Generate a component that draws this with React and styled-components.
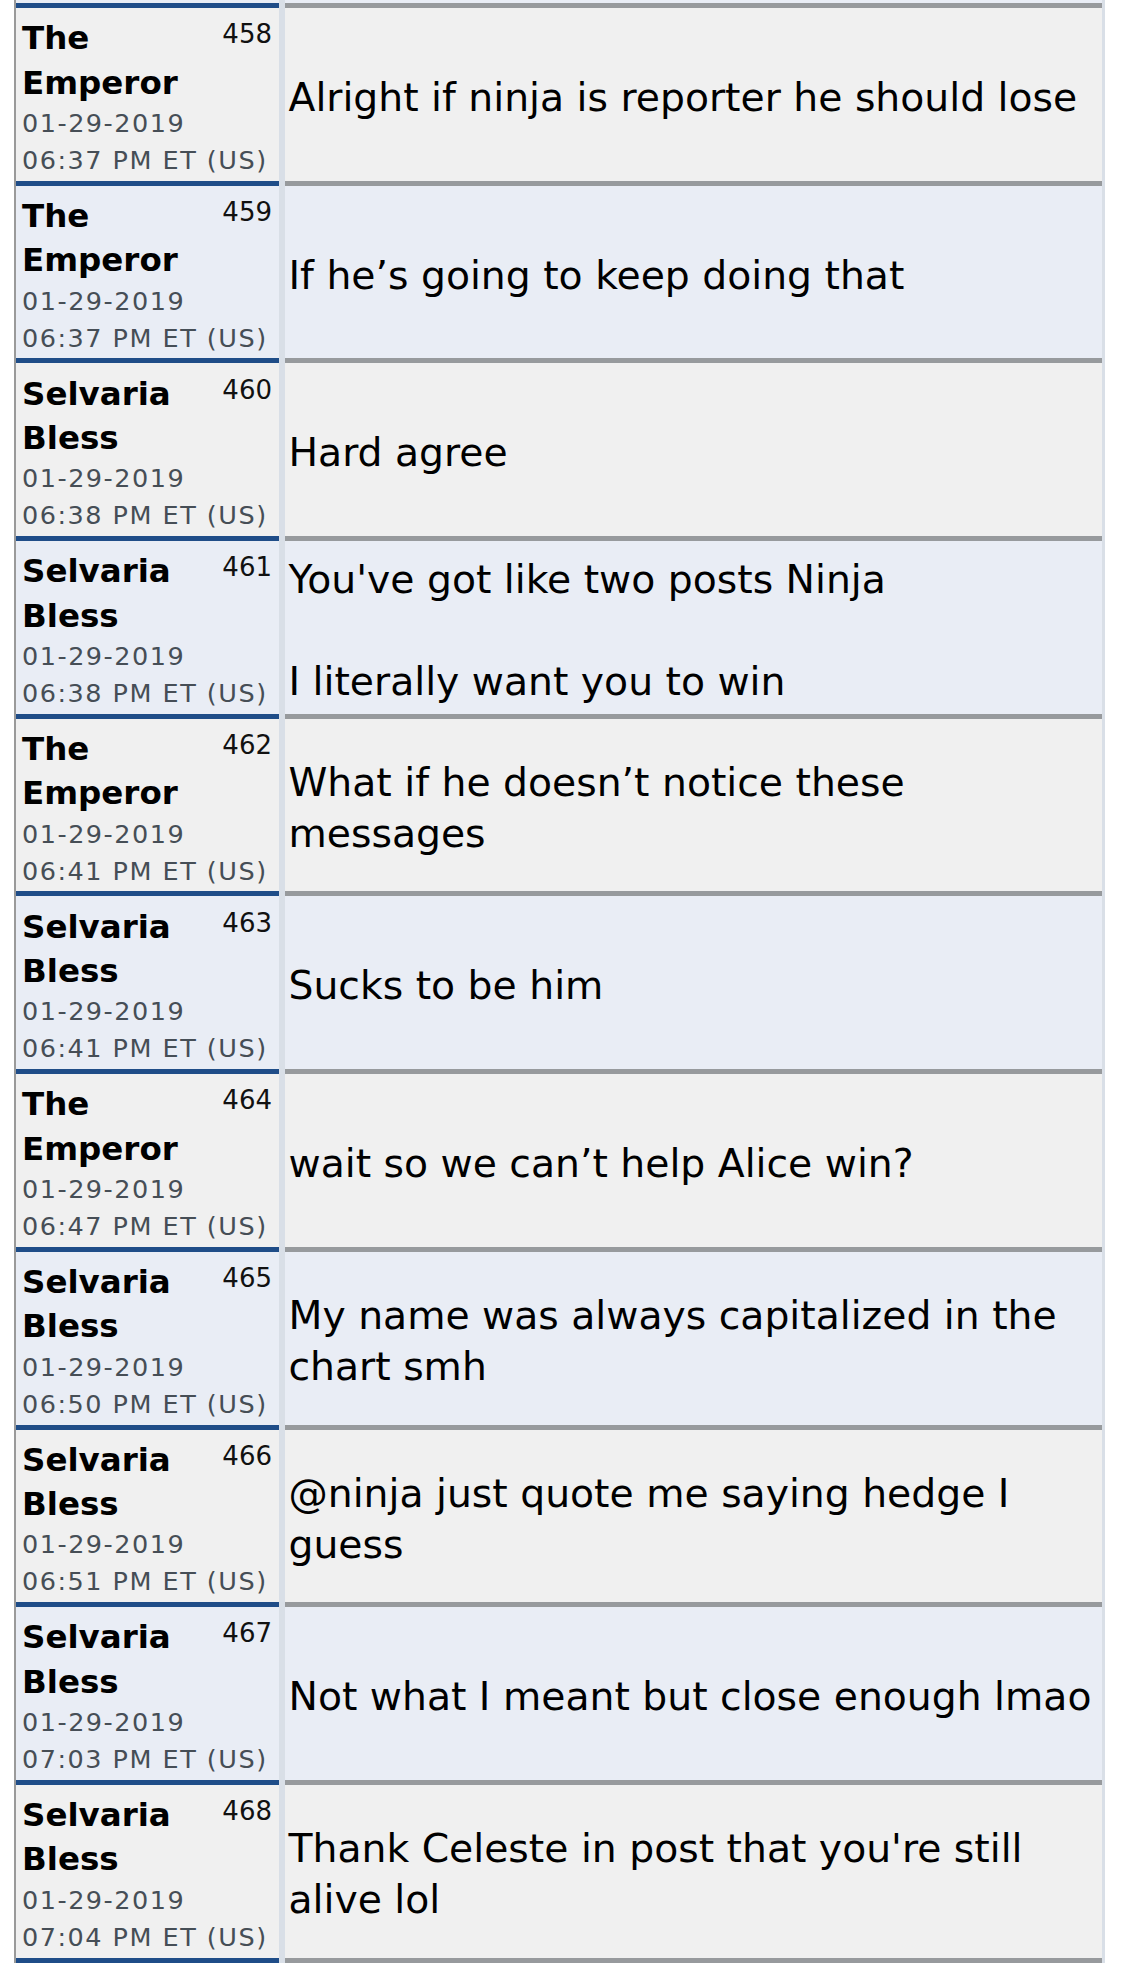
import React from 'react';
import styled, { createGlobalStyle } from 'styled-components';

const posts = [
  { num: 458, author: 'The Emperor', time: '06:37 PM ET (US)', body: 'Alright if ninja is reporter he should lose' },
  { num: 459, author: 'The Emperor', time: '06:37 PM ET (US)', body: 'If he’s going to keep doing that' },
  { num: 460, author: 'Selvaria Bless', time: '06:38 PM ET (US)', body: 'Hard agree' },
  { num: 461, author: 'Selvaria Bless', time: '06:38 PM ET (US)', body: "You've got like two posts Ninja\n\nI literally want you to win" },
  { num: 462, author: 'The Emperor', time: '06:41 PM ET (US)', body: 'What if he doesn’t notice these messages' },
  { num: 463, author: 'Selvaria Bless', time: '06:41 PM ET (US)', body: 'Sucks to be him' },
  { num: 464, author: 'The Emperor', time: '06:47 PM ET (US)', body: 'wait so we can’t help Alice win?' },
  { num: 465, author: 'Selvaria Bless', time: '06:50 PM ET (US)', body: 'My name was always capitalized in the chart smh' },
  { num: 466, author: 'Selvaria Bless', time: '06:51 PM ET (US)', body: '@ninja just quote me saying hedge I guess' },
  { num: 467, author: 'Selvaria Bless', time: '07:03 PM ET (US)', body: 'Not what I meant but close enough lmao' },
  { num: 468, author: 'Selvaria Bless', time: '07:04 PM ET (US)', body: "Thank Celeste in post that you're still alive lol" },
];

const GlobalStyle = createGlobalStyle`
  body {
    margin: 0;
    background: #ffffff;
    font-family: 'DejaVu Sans', Verdana, sans-serif;
  }
`;

const App = () => {
  return (
    <StyledPage>
      <GlobalStyle />
      <StyledThread>
        <StyledRow>
          <StyledTail alt />
          <StyledTail alt />
        </StyledRow>
        {posts.map((post, i) => (
          <StyledRow key={post.num}>
            <StyledAuthorCell alt={i % 2 === 1}>
              <StyledHead>
                <StyledName>{post.author}</StyledName>
                <StyledNumber>{post.num}</StyledNumber>
              </StyledHead>
              <StyledDate>01-29-2019</StyledDate>
              <StyledDate>{post.time}</StyledDate>
            </StyledAuthorCell>
            <StyledMessageCell alt={i % 2 === 1}>
              <StyledMessage>{post.body}</StyledMessage>
            </StyledMessageCell>
          </StyledRow>
        ))}
        <StyledRow>
          <StyledAuthorCell alt stub />
          <StyledMessageCell alt stub />
        </StyledRow>
      </StyledThread>
    </StyledPage>
  );
};

const StyledPage = styled.div`
  padding-left: 14px;
  height: 1963px;
  overflow: hidden;
`;

const StyledThread = styled.div`
  width: 1086px;
  display: flex;
  flex-direction: column;
  border-left: 2px solid #9a9a9a;
  padding-right: 3px;
  background: #d9dfe7;
`;

const StyledRow = styled.div`
  display: grid;
  grid-template-columns: 263px 817px;
  column-gap: 6px;
`;

const StyledTail = styled.div`
  height: 3px;
  background: ${props => (props.alt ? '#e9edf5' : '#f0f0f0')};
`;

const StyledAuthorCell = styled.div`
  box-sizing: border-box;
  height: ${props => (props.stub ? '12px' : '177.7px')};
  padding: 8.3px 7px 0 6px;
  border-top: 5px solid #1f4d88;
  background: ${props => (props.alt ? '#e9edf5' : '#f0f0f0')};
`;

const StyledHead = styled.div`
  display: flex;
  justify-content: space-between;
  align-items: flex-start;
  gap: 8px;
`;

const StyledName = styled.div`
  font-size: 32.5px;
  font-weight: bold;
  line-height: 44.3px;
  color: #000000;
`;

const StyledNumber = styled.div`
  flex-shrink: 0;
  font-size: 26px;
  line-height: 37px;
  color: #111111;
`;

const StyledDate = styled.div`
  font-size: 25.5px;
  line-height: 37px;
  letter-spacing: 1.5px;
  color: #464e56;
  white-space: nowrap;
`;

const StyledMessageCell = styled.div`
  box-sizing: border-box;
  height: ${props => (props.stub ? '12px' : '177.7px')};
  display: flex;
  align-items: center;
  padding: 8px 4px 0 3.5px;
  border-top: 5px solid #979a9d;
  background: ${props => (props.alt ? '#e9edf5' : '#f0f0f0')};
`;

const StyledMessage = styled.div`
  font-size: 39.3px;
  line-height: 50.8px;
  color: #000000;
  white-space: pre-line;
`;

export default App;
